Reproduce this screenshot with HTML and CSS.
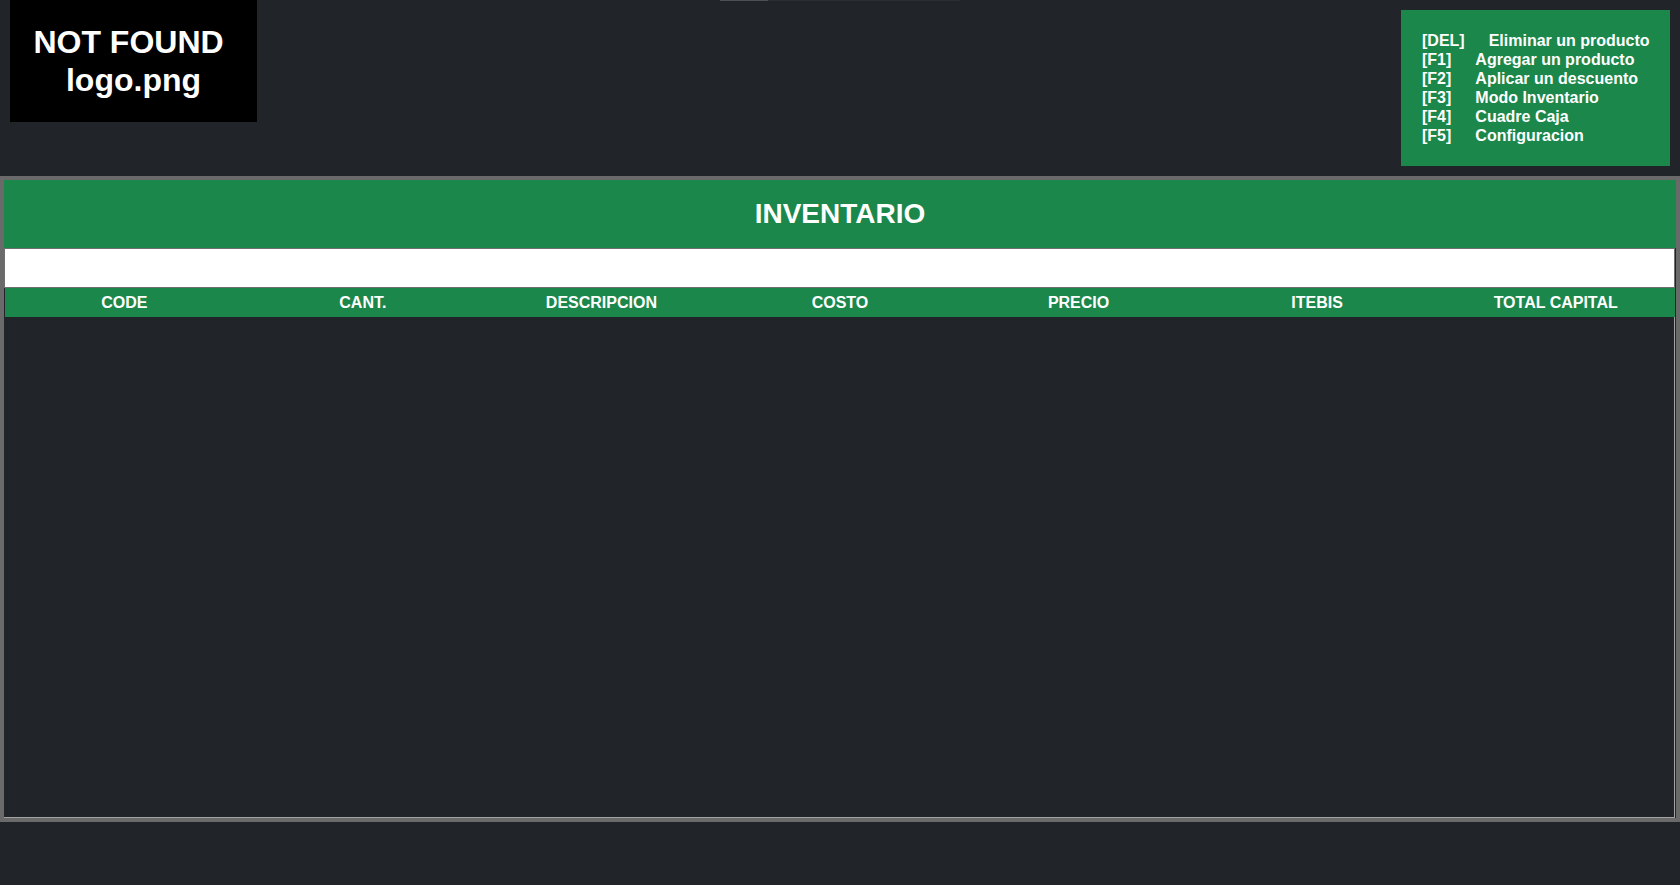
FILE: index.html
```html
<!DOCTYPE html>
<html lang="es">
<head>
<meta charset="utf-8">
<title>Inventario</title>
<link rel="stylesheet" href="styles.css">
</head>
<body>
<div class="scrollmark"><span class="thumb"></span></div>
<header class="top">
  <div class="logo">
    <span class="logo-l1">NOT FOUND</span>
    <span>logo.png</span>
  </div>
  <div class="shortcuts">
    <div class="sc"><span class="key">[DEL]</span><span>Eliminar un producto</span></div>
    <div class="sc"><span class="key">[F1]</span><span>Agregar un producto</span></div>
    <div class="sc"><span class="key">[F2]</span><span>Aplicar un descuento</span></div>
    <div class="sc"><span class="key">[F3]</span><span>Modo Inventario</span></div>
    <div class="sc"><span class="key">[F4]</span><span>Cuadre Caja</span></div>
    <div class="sc"><span class="key">[F5]</span><span>Configuracion</span></div>
  </div>
</header>
<main class="panel">
  <div class="title">INVENTARIO</div>
  <input class="search" type="text">
  <div class="thead">
    <div>CODE</div>
    <div>CANT.</div>
    <div>DESCRIPCION</div>
    <div>COSTO</div>
    <div>PRECIO</div>
    <div>ITEBIS</div>
    <div>TOTAL CAPITAL</div>
  </div>
  <div class="tbody"></div>
</main>
</body>
</html>
```
FILE: styles.css
```css
* { box-sizing: border-box; }
html, body { margin: 0; padding: 0; }
body {
  background: #212529;
  font-family: "Liberation Sans", Arial, sans-serif;
  color: #fff;
  width: 1680px;
  height: 885px;
  overflow: hidden;
  position: relative;
}
.scrollmark {
  position: absolute;
  left: 720px;
  top: 0;
  width: 240px;
  height: 1px;
  background: #2b2e31;
  display: flex;
}
.scrollmark .thumb {
  width: 48px;
  height: 1px;
  background: #4e5053;
}
.top {
  height: 176px;
  display: flex;
  justify-content: space-between;
  align-items: flex-start;
  padding: 0 10px;
}
.logo {
  width: 247px;
  height: 122px;
  background: #000;
  display: flex;
  flex-direction: column;
  align-items: center;
  justify-content: center;
  font-weight: bold;
  font-size: 32px;
  line-height: 38px;
}
.logo-l1 { padding-right: 10px; }
.shortcuts {
  margin-top: 10px;
  width: 269px;
  height: 156px;
  background: #1b874b;
  padding: 21px 0 0 21px;
  font-weight: bold;
  font-size: 16px;
  line-height: 19px;
}
.sc { display: flex; white-space: nowrap; }
.key { margin-right: 24px; }
.panel {
  height: 646px;
  border: 4px solid #6a6a6a;
  display: flex;
  flex-direction: column;
}
.title {
  height: 68px;
  background: #1b874b;
  display: flex;
  align-items: center;
  justify-content: center;
  font-weight: bold;
  font-size: 28px;
}
.search {
  display: block;
  width: 1671px;
  height: 40px;
  margin: 0;
  border: 1px solid #6f6f6f;
  background: #fff;
  outline: none;
}
.thead {
  margin-left: 1px;
  width: 1670px;
  height: 29px;
  background: #1b874b;
  display: grid;
  grid-template-columns: repeat(7, 1fr);
  align-items: center;
  text-align: center;
  font-weight: bold;
  font-size: 16px;
}
.tbody {
  flex: 1;
  width: 1671px;
  border-right: 1px solid #a3a3a3;
  border-bottom: 1px solid #a3a3a3;
}
```
